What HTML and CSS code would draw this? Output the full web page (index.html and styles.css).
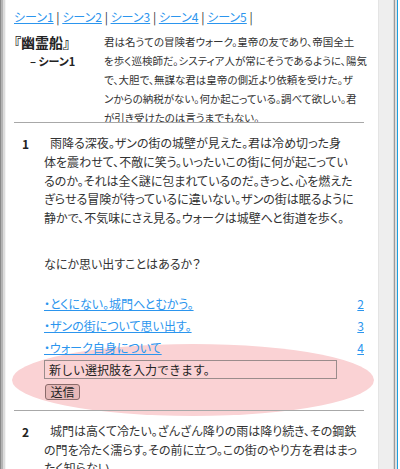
FILE: index.html
```html
<!DOCTYPE html>
<html lang="ja">
<head>
    <meta charset="UTF-8">
    <meta name="viewport" content="width=device-width, initial-scale=1.0">
    <title>幽霊船 - シーン1</title>
    <link rel="stylesheet" href="styles.css">
</head>
<body>
    <div class="window">
        <div class="frame-left"></div>
        <div class="page">
            <div class="scene-nav">
                <a href="#">シーン1</a> | <a href="#">シーン2</a> | <a href="#">シーン3</a> | <a href="#">シーン4</a> | <a href="#">シーン5</a> |
            </div>
            <div class="intro">
                <div class="intro-title">
                    <h1>『幽霊船』</h1>
                    <h2>– シーン1</h2>
                </div>
                <p class="intro-text">君は名うての冒険者ウォーク。皇帝の友であり、帝国全土<br>を歩く巡検師だ。システィア人が常にそうであるように、陽気<br>で、大胆で、無謀な君は皇帝の側近より依頼を受けた。ザ<br>ンからの納税がない。何か起こっている。調べて欲しい。君<br>が引き受けたのは言うまでもない。</p>
            </div>

            <div class="scene">
                <div class="scene-no">1</div>
                <div class="scene-body">
                    <p class="story">&ensp;雨降る深夜。ザンの街の城壁が見えた。君は冷め切った身<br>体を震わせて、不敵に笑う。いったいこの街に何が起こってい<br>るのか。それは全く謎に包まれているのだ。きっと、心を燃えた<br>ぎらせる冒険が待っているに違いない。ザンの街は眠るように<br>静かで、不気味にさえ見る。ウォークは城壁へと街道を歩く。</p>
                    <p class="question">なにか思い出すことはあるか？</p>
                    <ul class="choices">
                        <li><a href="#">・とくにない。城門へとむかう。</a><a href="#" class="goto">2</a></li>
                        <li><a href="#">・ザンの街について思い出す。</a><a href="#" class="goto">3</a></li>
                        <li><a href="#">・ウォーク自身について</a><a href="#" class="goto">4</a></li>
                    </ul>
                    <form class="new-choice">
                        <input type="text" value="新しい選択肢を入力できます。">
                        <button type="button">送信</button>
                    </form>
                </div>
                <div class="highlight"></div>
            </div>

            <div class="scene">
                <div class="scene-no">2</div>
                <div class="scene-body">
                    <p class="story">&ensp;城門は高くて冷たい。ざんざん降りの雨は降り続き、その鋼鉄<br>の門を冷たく濡らす。その前に立つ。この街のやり方を君はまっ<br>たく知らない。</p>
                </div>
            </div>
        </div>
        <div class="scrollbar"></div>
        <div class="frame-right"></div>
    </div>
</body>
</html>
```

FILE: styles.css
```css
body {
    margin: 0;
    font-family: "Noto Sans CJK JP", "Liberation Sans", sans-serif;
    font-feature-settings: "palt";
    color: #222;
    background: #fff;
}
.window {
    display: flex;
    height: 469px;
    overflow: hidden;
}
.frame-left {
    width: 6px;
    background: linear-gradient(to right, #8a8a8a 0, #8a8a8a 1px, #b4b4b4 1px, #b4b4b4 3px, #dcdcdc 3px, #dcdcdc 5px, #f4f4f4 5px);
}
.page {
    flex: 1;
    padding: 10px 14px 0 8px;
    overflow: hidden;
}
.scrollbar {
    width: 14px;
    background: #eeeeee;
    border-left: 1px solid #e4e4e4;
}
.frame-right {
    width: 7px;
    background: linear-gradient(to right, #d8d8d8 0, #d8d8d8 1px, #9a9a9a 1px, #9a9a9a 2px, #e0e0e0 2px, #e0e0e0 4px, #1c9fe0 4px, #1c9fe0 5px, #fff 5px);
}
a {
    color: #2b95ee;
}
.scene-nav {
    font-size: 12px;
    line-height: 14px;
    white-space: nowrap;
    color: #333;
}
.intro {
    display: flex;
    margin: 8px 0 -5px;
}
.intro-title {
    width: 90px;
    flex: none;
}
.intro-title h1 {
    margin: 0;
    font-size: 14px;
    line-height: 20px;
}
.intro-title h2 {
    margin: 0 0 0 16px;
    font-size: 11px;
    line-height: 19px;
}
.intro-text {
    margin: 0;
    font-size: 10.5px;
    line-height: 19px;
    white-space: nowrap;
    color: #333;
}
.scene {
    position: relative;
    display: flex;
    border-top: 1px solid #a8a8a8;
    padding-top: 11px;
}
.scene + .scene {
    margin-top: 10px;
}
.scene-no {
    width: 30px;
    flex: none;
    padding-left: 8px;
    box-sizing: border-box;
    font-size: 12px;
    font-weight: bold;
    line-height: 19px;
}
.scene-body {
    flex: 1;
    position: relative;
    z-index: 1;
    font-size: 12px;
    line-height: 18.8px;
    color: #333;
}
.story {
    margin: 0;
    white-space: nowrap;
}
.question {
    margin: 27px 0 0;
}
.choices {
    list-style: none;
    margin: 19px 0 0;
    padding: 0;
}
.choices li {
    display: flex;
    justify-content: space-between;
    line-height: 22px;
}
.new-choice {
    margin: 1px 0 0;
}
.new-choice input {
    display: block;
    width: 293px;
    height: 19px;
    box-sizing: border-box;
    margin: 0;
    padding: 0 4px;
    border: 1px solid #9a8c8c;
    background: transparent;
    font: 12px "Noto Sans CJK JP", sans-serif;
    color: #222;
}
.new-choice button {
    display: block;
    margin: 5px 0 0 1px;
    width: 35px;
    height: 16px;
    padding: 0;
    border: 1px solid #8a6a6a;
    border-radius: 3px;
    background: #e6b8b8;
    font: 12px/14px "Noto Sans CJK JP", sans-serif;
    color: #222;
}
/* 入力欄まわりの強調 */
.highlight {
    position: absolute;
    left: -2px;
    top: 221px;
    width: 362px;
    height: 72px;
    border-radius: 50%;
    background: #fad2d4;
}
```
